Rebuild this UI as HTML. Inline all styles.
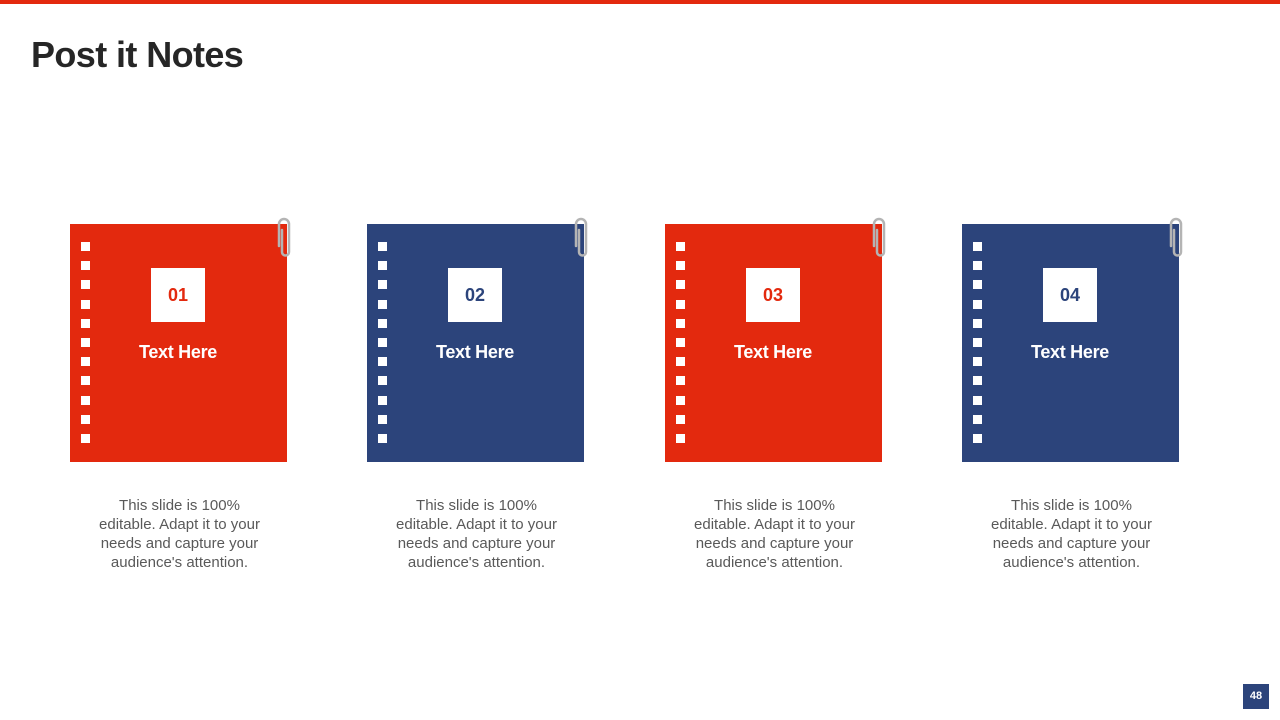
<!DOCTYPE html><html><head><style>
body{margin:0;width:1280px;height:720px;position:relative;background:#fff;font-family:"Liberation Sans",sans-serif;overflow:hidden}
.bar{position:absolute;left:0;top:0;width:1280px;height:4px;background:#e3290e}
h1{position:absolute;left:31px;top:34px;margin:0;font-size:36px;font-weight:bold;color:#262626;letter-spacing:-0.6px}
.card{position:absolute;top:224px;width:217px;height:238px}
.r{background:#e3290e}.b{background:#2c447b}
.sq{position:absolute;left:11px;width:9px;height:9px;background:#fff}
.num{position:absolute;left:81px;top:44px;width:54px;height:54px;background:#fff;text-align:center;line-height:54px;font-size:18px;font-weight:bold}
.r .num{color:#e3290e}.b .num{color:#2c447b}
.th{position:absolute;left:0;width:216px;top:118px;text-align:center;color:#fff;font-weight:bold;font-size:18px;letter-spacing:-0.3px}
.clip{position:absolute;right:-6px;top:-8px}
.desc{position:absolute;top:496px;width:217px;text-align:center;color:#595959;font-size:15px;line-height:19px}
.pg{position:absolute;left:1243px;top:684px;width:26px;height:25px;background:#2c447b;color:#fff;font-size:11px;font-weight:bold;text-align:center;line-height:25px}
</style></head><body>
<div class="bar"></div>
<h1>Post it Notes</h1>
<div class="card r" style="left:70px"></div>
<div class="card b" style="left:367px"></div>
<div class="card r" style="left:665px"></div>
<div class="card b" style="left:962px"></div>
<div class="desc" style="left:71px">This slide is 100%<br>editable. Adapt it to your<br>needs and capture your<br>audience's attention.</div>
<div class="desc" style="left:368px">This slide is 100%<br>editable. Adapt it to your<br>needs and capture your<br>audience's attention.</div>
<div class="desc" style="left:666px">This slide is 100%<br>editable. Adapt it to your<br>needs and capture your<br>audience's attention.</div>
<div class="desc" style="left:963px">This slide is 100%<br>editable. Adapt it to your<br>needs and capture your<br>audience's attention.</div>
<div class="pg">48</div>
<script>
var cards=document.querySelectorAll('.card');
cards.forEach(function(c,i){
 var h='';
 for(var k=0;k<11;k++)h+='<div class="sq" style="top:'+(18+k*19.2)+'px"></div>';
 h+='<div class="num">0'+(i+1)+'</div><div class="th">Text Here</div>';
 h+='<svg class="clip" width="18" height="44" viewBox="0 0 18 44"><path d="M4 30 V8 a5 5 0 0 1 10 0 V36 a3.5 3.5 0 0 1 -7 0 V14" fill="none" stroke="#b4b4b4" stroke-width="2.5" stroke-linecap="round"/></svg>';
 c.innerHTML=h;
});
</script>
</body></html>
